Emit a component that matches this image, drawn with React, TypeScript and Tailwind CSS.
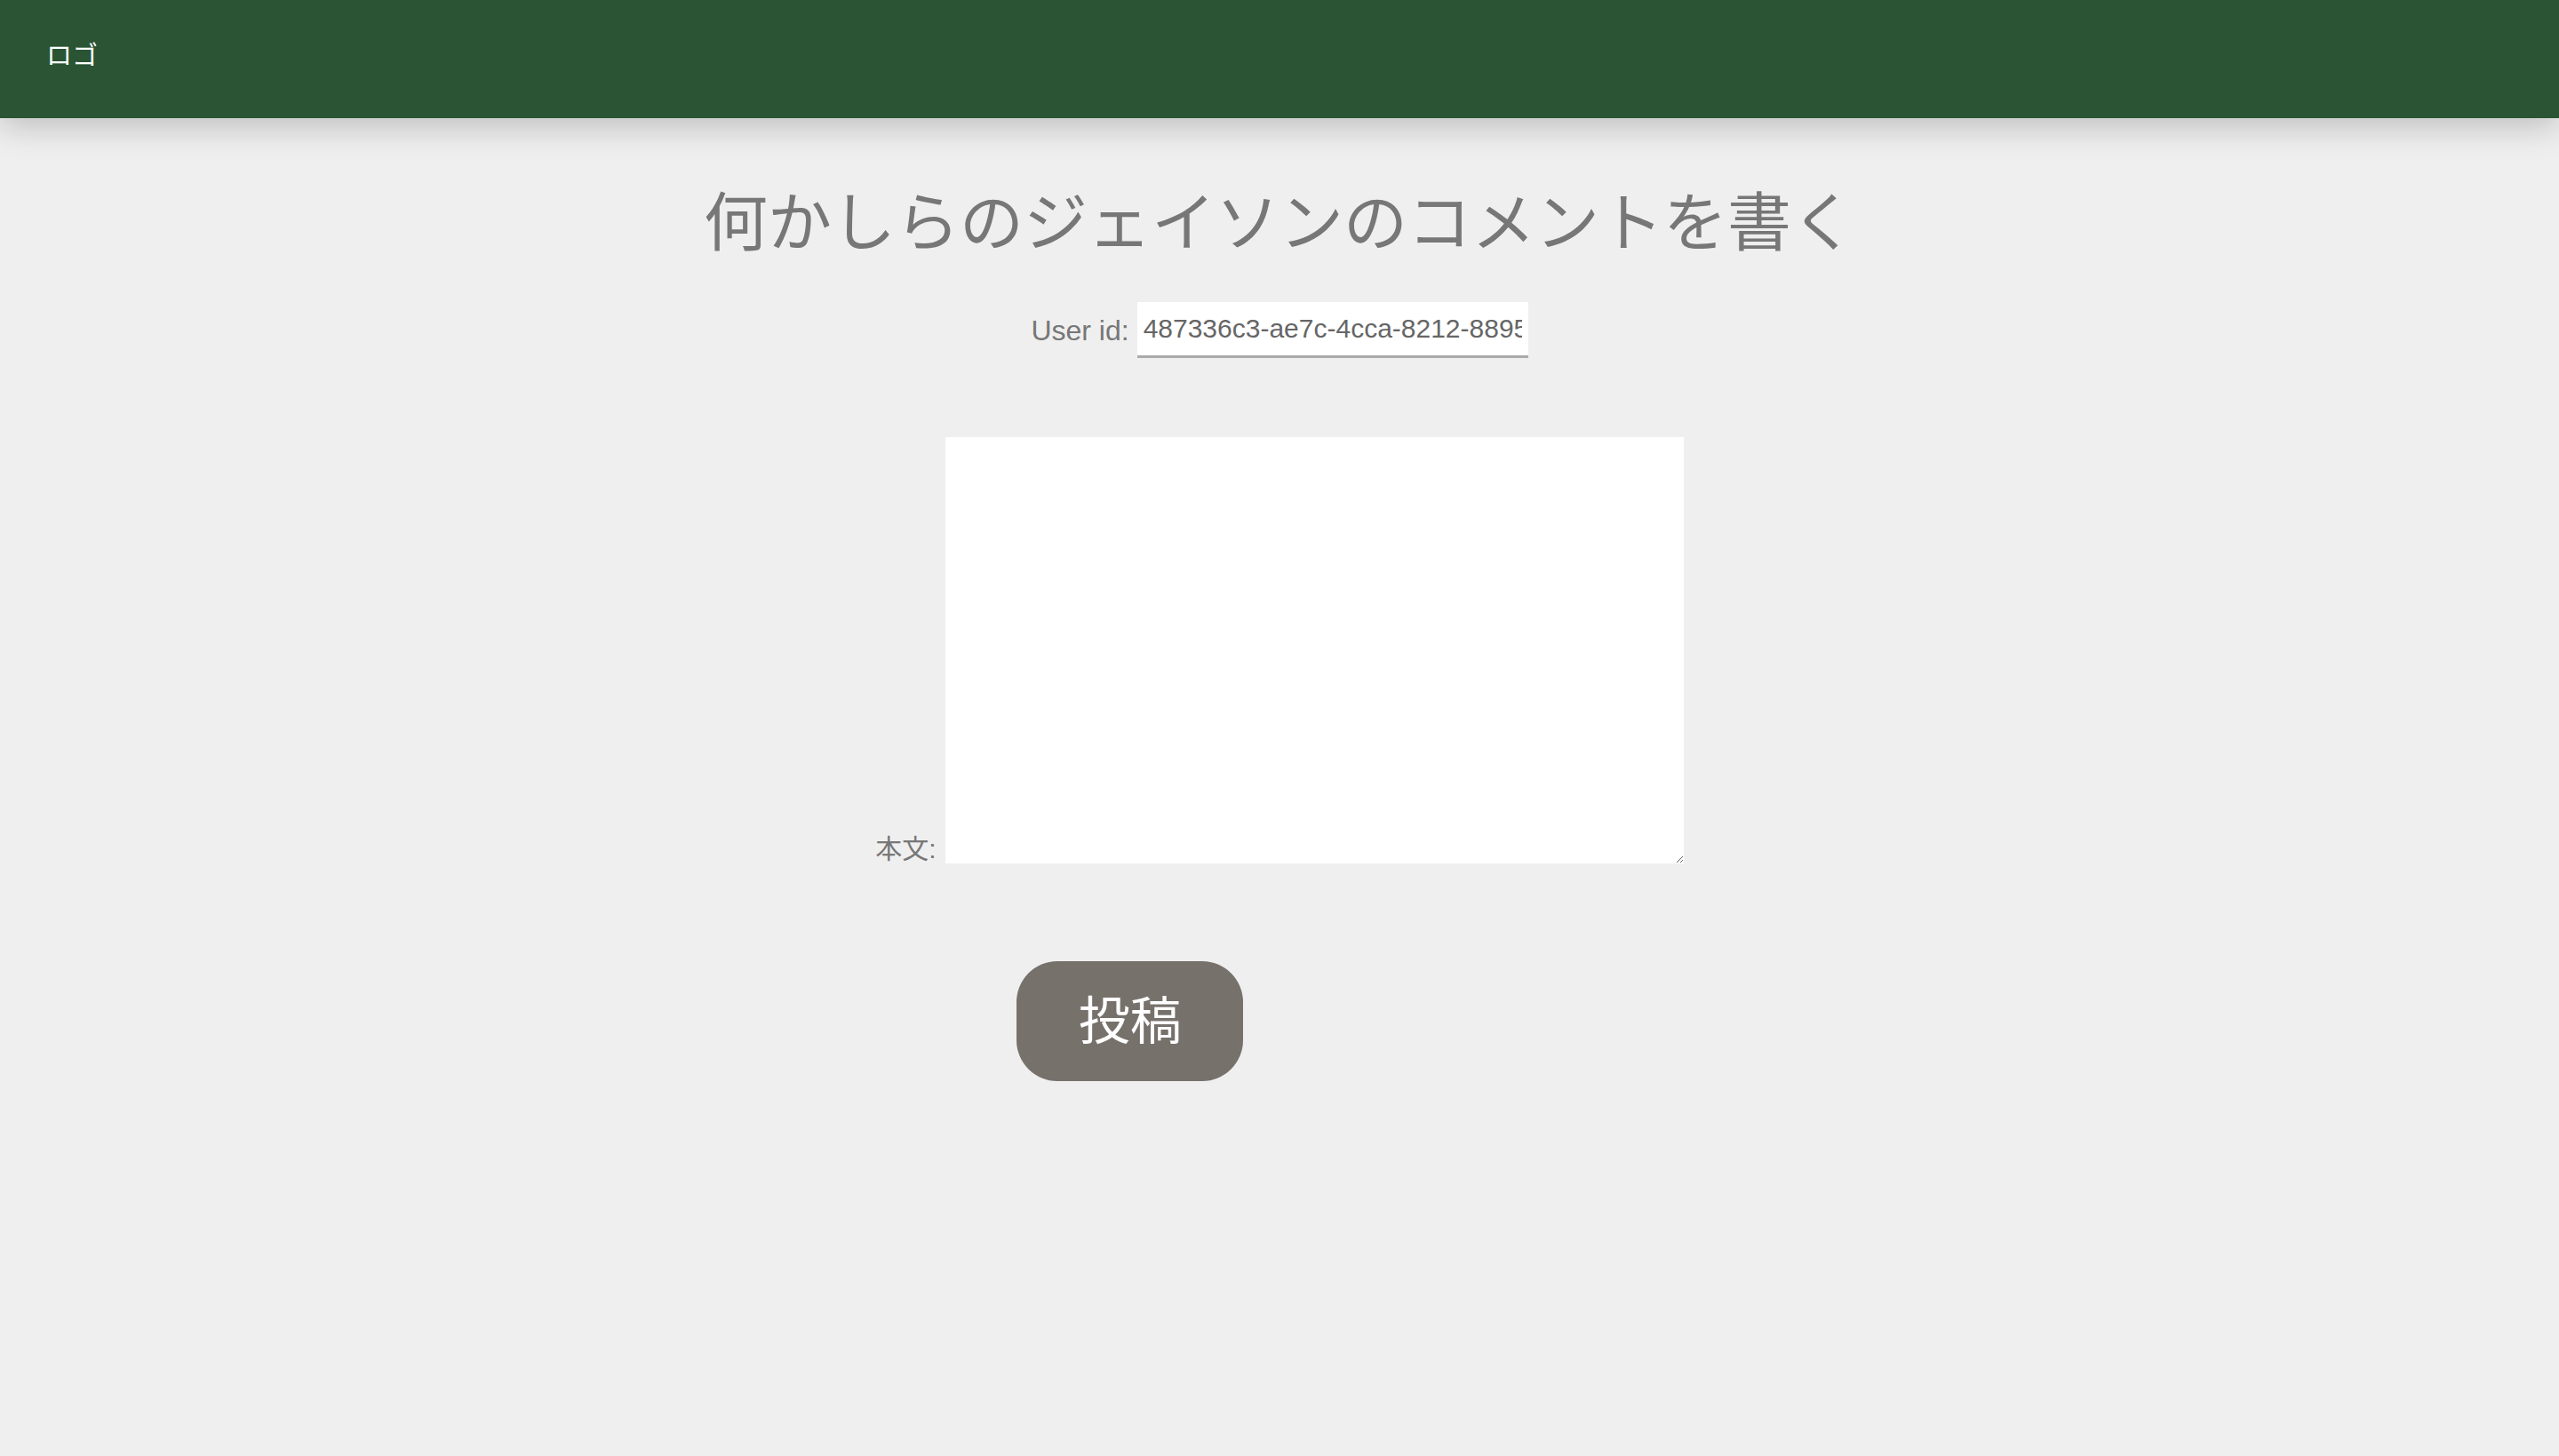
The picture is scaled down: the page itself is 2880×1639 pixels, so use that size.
import React from "react";

const font = { fontFamily: '"Liberation Sans", "Noto Sans CJK JP", sans-serif' };

function Header() {
  return (
    <header className="flex h-[133px] w-full items-start bg-[#2a5433] pl-[52px] pt-[49px] shadow-[0_8px_36px_rgba(0,0,0,0.22)]">
      <span className="text-[29px] leading-none text-white">ロゴ</span>
    </header>
  );
}

export default function App() {
  return (
    <div className="flex min-h-[1639px] w-full flex-col bg-[#efefef]" style={font}>
      <Header />
      <main className="flex flex-col items-center">
        <h1 className="mt-[82px] text-[72px] leading-none font-normal text-[#777]">
          何かしらのジェイソンのコメントを書く
        </h1>

        <div className="mt-[53px] flex items-center gap-[9px]">
          <label className="text-[32px] leading-none text-[#777]">User id:</label>
          <input
            readOnly
            value="487336c3-ae7c-4cca-8212-8895a1c2d3e4"
            className="h-[63px] w-[440px] border-b-[3px] border-[#aaa] bg-white px-[7px] text-[30px] text-[#666] outline-none"
          />
        </div>

        <div className="mt-[89px] flex flex-col">
          <div className="flex items-end gap-[10px]">
            <label className="pb-[1px] text-[30px] leading-none text-[#777]">本文:</label>
            <textarea className="h-[480px] w-[831px] bg-white outline-none" />
          </div>
          <button className="mt-[110px] ml-[159px] h-[135px] w-[255px] rounded-[46px] bg-[#77716c] text-[58px] leading-none text-white self-start">
            投稿
          </button>
        </div>
      </main>
    </div>
  );
}
